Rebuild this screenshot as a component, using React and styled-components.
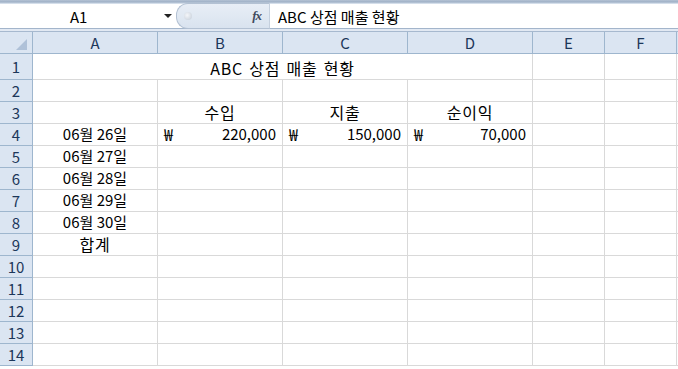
import React from 'react'
import styled, { createGlobalStyle } from 'styled-components'

const GlobalStyle = createGlobalStyle`
    html, body {
        margin: 0;
        padding: 0;
        background: #ffffff;
        overflow: hidden;
    }
    body {
        font-family: "Noto Sans CJK KR", "Noto Sans", sans-serif;
    }
`

const COLS = [125, 125, 125, 125, 72, 72]
const LETTERS = ['A', 'B', 'C', 'D', 'E', 'F']

const Window = styled.div`
    width: 678px;
    height: 369px;
    overflow: hidden;
    background: #ffffff;
`

const TopEdge = styled.div`
    height: 4px;
    background: linear-gradient(#b4c2d4, #9fb0c6 50%, #e6edf6);
`

const FormulaBar = styled.div`
    display: flex;
    height: 24px;
    border-bottom: 1px solid #a3b5cb;
    background: #ffffff;
`

const NameBox = styled.div`
    position: relative;
    width: 176px;
    display: flex;
    align-items: center;
    padding-left: 70px;
    box-sizing: border-box;
    font-size: 15px;
    color: #000;
`

const DropArrow = styled.span`
    position: absolute;
    left: 164px;
    top: 10px;
    width: 0;
    height: 0;
    border-left: 4px solid transparent;
    border-right: 4px solid transparent;
    border-top: 4px solid #222;
`

const FxPanel = styled.div`
    width: 94px;
    display: flex;
    align-items: center;
    justify-content: space-between;
    padding: 0 8px 0 7px;
    box-sizing: border-box;
    background: linear-gradient(#e8eef6, #d9e3ef);
    border: 1px solid #b3c1d3;
    border-right-color: #c5d0de;
    border-radius: 12px 0 0 12px;
    margin-top: -1px;
    margin-bottom: -1px;
`

const Grip = styled.span`
    width: 8px;
    height: 8px;
    border-radius: 50%;
    background: radial-gradient(circle at 40% 40%, #f4f6f9, #c3ccd8);
`

const FxLabel = styled.span`
    font-family: "Liberation Serif", serif;
    font-style: italic;
    font-weight: bold;
    font-size: 13px;
    color: #404a5e;
    letter-spacing: -1px;
`

const FormulaInput = styled.div`
    flex: 1;
    display: flex;
    align-items: center;
    padding-left: 8px;
    font-size: 15px;
    color: #000;
    white-space: nowrap;
`

const Gap = styled.div`
    height: 2px;
    background: #e2e9f3;
    border-bottom: 1px solid #a7b9cf;
`

const Sheet = styled.div`
    display: grid;
    grid-template-columns: 33px ${COLS.map(w => `${w}px`).join(' ')} 1fr;
    grid-template-rows: 22px 26px repeat(13, 22px);
`

const HeaderCell = styled.div`
    box-sizing: border-box;
    background: #dbe5f2;
    border-right: 1px solid #9eb6ce;
    border-bottom: 1px solid #9eb6ce;
    display: flex;
    align-items: center;
    justify-content: center;
    font-size: 15px;
    line-height: 20px;
    color: #1c375a;
    padding-top: 1px;
`

const Corner = styled(HeaderCell)`
    position: relative;
`

const CornerTriangle = styled.span`
    position: absolute;
    right: 5px;
    bottom: 3px;
    width: 0;
    height: 0;
    border-left: 11px solid transparent;
    border-bottom: 11px solid #afc1d8;
`

const Cell = styled.div`
    box-sizing: border-box;
    border-right: 1px solid #d9d9d9;
    border-bottom: 1px solid #d9d9d9;
    display: flex;
    align-items: flex-end;
    justify-content: ${p => p.$align || 'center'};
    padding: 0 6px 1px;
    font-size: 15px;
    line-height: 20px;
    color: #000;
    white-space: nowrap;
    grid-column: ${p => p.$span ? `span ${p.$span}` : 'auto'};
`

const Label = styled.span`
    font-size: 16px;
    letter-spacing: 0.75px;
    word-spacing: 2px;
`

const Won = styled.span`
    flex: 1;
    font-size: 16px;
`

const rows = [
    { title: 'ABC 상점 매출 현황' },
    {},
    { labels: ['', '수입', '지출', '순이익'] },
    { cells: ['06월 26일'], money: ['220,000', '150,000', '70,000'] },
    { cells: ['06월 27일'] },
    { cells: ['06월 28일'] },
    { cells: ['06월 29일'] },
    { cells: ['06월 30일'] },
    { labels: ['합계'] },
    {}, {}, {}, {}, {},
]

const Row = ({ n, row }) => {
    const out = [<HeaderCell key="h">{n}</HeaderCell>]
    if (row.title) {
        out.push(<Cell key="t" $span={4}><Label>{row.title}</Label></Cell>)
        out.push(<Cell key="e" />, <Cell key="f" />, <Cell key="x" />)
        return out
    }
    for (let i = 0; i < 7; i++) {
        if (row.money && i >= 1 && i <= 3) {
            out.push(
                <Cell key={i} $align="flex-end">
                    <Won>₩</Won>{row.money[i - 1]}
                </Cell>
            )
        } else if (row.labels && row.labels[i]) {
            out.push(<Cell key={i}><Label>{row.labels[i]}</Label></Cell>)
        } else {
            out.push(<Cell key={i}>{row.cells ? row.cells[i] : ''}</Cell>)
        }
    }
    return out
}

const App = () => (
    <Window>
        <GlobalStyle />
        <TopEdge />
        <FormulaBar>
            <NameBox>
                A1
                <DropArrow />
            </NameBox>
            <FxPanel>
                <Grip />
                <FxLabel>fx</FxLabel>
            </FxPanel>
            <FormulaInput>ABC 상점 매출 현황</FormulaInput>
        </FormulaBar>
        <Gap />
        <Sheet>
            <Corner><CornerTriangle /></Corner>
            {LETTERS.map(l => <HeaderCell key={l}>{l}</HeaderCell>)}
            <HeaderCell />
            {rows.map((r, i) => <Row key={i} n={i + 1} row={r} />)}
        </Sheet>
    </Window>
)

export default App
